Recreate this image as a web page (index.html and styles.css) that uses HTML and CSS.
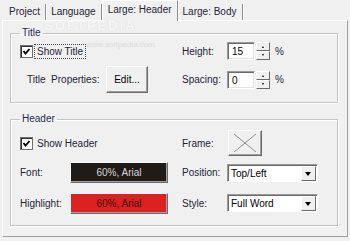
FILE: index.html
```html
<!DOCTYPE html>
<html lang="en">
<head>
    <meta charset="UTF-8">
    <title>Large: Header</title>
    <link rel="stylesheet" href="styles.css">
</head>
<body>
    <div class="tabs">
        <div class="tab">Project</div>
        <div class="tab">Language</div>
        <div class="tab active">Large: Header</div>
        <div class="tab">Large: Body</div>
    </div>

    <div class="panel">
        <fieldset class="group group-title">
            <legend>Title</legend>
            <div class="row row-1">
                <div class="left">
                    <span class="box"><svg width="9" height="9" viewBox="0 0 9 9"><polyline points="1.5,4 3.5,6.5 7.5,2" fill="none" stroke="#000" stroke-width="1.8"/></svg></span>
                    <span class="check-text focus">Show Title</span>
                </div>
                <div class="right">
                    <span class="label-r">Height:</span>
                    <span class="field">15</span>
                    <span class="spin"><span class="spin-btn up"></span><span class="spin-btn down"></span></span>
                    <span class="unit">%</span>
                </div>
            </div>
            <div class="row row-2">
                <div class="left">
                    <span class="label-props">Title&nbsp; Properties:</span>
                    <span class="btn btn-edit">Edit...</span>
                </div>
                <div class="right">
                    <span class="label-r">Spacing:</span>
                    <span class="field">0</span>
                    <span class="spin"><span class="spin-btn up"></span><span class="spin-btn down"></span></span>
                    <span class="unit">%</span>
                </div>
            </div>
        </fieldset>

        <fieldset class="group group-header">
            <legend>Header</legend>
            <div class="row row-3">
                <div class="left">
                    <span class="box"><svg width="9" height="9" viewBox="0 0 9 9"><polyline points="1.5,4 3.5,6.5 7.5,2" fill="none" stroke="#000" stroke-width="1.8"/></svg></span>
                    <span class="check-text">Show Header</span>
                </div>
                <div class="right">
                    <span class="label-r">Frame:</span>
                    <span class="btn btn-frame"><svg width="32" height="24" viewBox="0 0 32 24"><line x1="5" y1="3" x2="27" y2="21" stroke="#777" stroke-width="0.8"/><line x1="27" y1="3" x2="5" y2="21" stroke="#777" stroke-width="0.8"/></svg></span>
                </div>
            </div>
            <div class="row row-4">
                <div class="left">
                    <span class="label-l">Font:</span>
                    <span class="swatch swatch-dark">60%, Arial</span>
                </div>
                <div class="right">
                    <span class="label-r">Position:</span>
                    <span class="select"><span class="select-text">Top/Left</span><span class="select-btn"></span></span>
                </div>
            </div>
            <div class="row row-5">
                <div class="left">
                    <span class="label-l">Highlight:</span>
                    <span class="swatch swatch-red">60%, Arial</span>
                </div>
                <div class="right">
                    <span class="label-r">Style:</span>
                    <span class="select"><span class="select-text">Full Word</span><span class="select-btn"></span></span>
                </div>
            </div>
        </fieldset>
    </div>

    <!-- watermark over the dialog -->
    <div class="watermark">SOFTPEDIA</div>
    <div class="watermark-url">www.softpedia.com</div>
</body>
</html>
```

FILE: styles.css
```css
body {
    margin: 0;
    width: 350px;
    height: 241px;
    overflow: hidden;
    position: relative;
    background: #f0f0f0;
    font-family: "Liberation Sans", Arial, sans-serif;
    font-size: 10px;
    color: #1e2436;
}

.tabs {
    display: flex;
    align-items: flex-end;
    height: 20px;
    padding-left: 4px;
    position: relative;
    z-index: 1;
}

.tab {
    height: 16px;
    line-height: 16px;
    padding: 0 5px;
    border-right: 1px solid #8c8c8c;
    box-shadow: 1px 0 0 #fff;
}

.tab.active {
    height: 21px;
    line-height: 17px;
    padding: 0 5px;
    margin-bottom: -1px;
    box-sizing: border-box;
    background: #f0f0f0;
    border-top: 1px solid #fff;
    border-left: 1px solid #fff;
    border-right: 1px solid #8c8c8c;
}

.panel {
    margin: 0 2px;
    height: 217px;
    box-sizing: border-box;
    border: 1px solid;
    border-color: #fff #a0a0a0 #a0a0a0 #fff;
    padding: 6px 9px 0 7px;
}

.group {
    margin: 0;
    padding: 0 9px 9px 9px;
    border: 1px solid #c4c4c4;
    box-shadow: 1px 1px 0 #fff, inset 1px 1px 0 #fff;
}

.group legend {
    padding: 0 2px;
    line-height: 12px;
    color: #1c2850;
}

.group-header {
    margin-top: 10px;
    padding-bottom: 12px;
}

.row {
    display: flex;
    align-items: center;
}

.left {
    width: 162px;
    display: flex;
    align-items: center;
}

.right {
    display: flex;
    align-items: center;
}

.row-1 { height: 18px; margin-top: 3px; }
.row-2 { height: 27px; margin-top: 6px; }
.row-3 { height: 26px; margin-top: 5px; }
.row-4 { height: 21px; margin-top: 6px; }
.row-5 { height: 20px; margin-top: 10px; }

.label-r {
    width: 45px;
}

.label-l {
    width: 50px;
}

.label-props {
    width: 79px;
    padding-left: 7px;
}

/* checkbox */
.box {
    width: 13px;
    height: 13px;
    box-sizing: border-box;
    border: 1px solid #6f6f6f;
    box-shadow: inset 1px 1px 0 #333;
    background: #fff;
    display: flex;
    align-items: center;
    justify-content: center;
}

.check-text {
    margin-left: 2px;
    padding: 1px 2px;
}

.focus {
    outline: 1px dotted #444;
}

/* sunken fields */
.field {
    width: 28px;
    height: 18px;
    box-sizing: border-box;
    border: 1px solid;
    border-color: #9a9a9a #fff #fff #9a9a9a;
    box-shadow: inset 1px 1px 0 #6a6a6a, inset -1px -1px 0 #e3e3e3;
    background: #fff;
    padding: 3px 0 0 4px;
    color: #000;
}

.spin {
    width: 14px;
    height: 18px;
    margin-left: 1px;
    display: flex;
    flex-direction: column;
}

.spin-btn {
    flex: 1;
    position: relative;
    box-sizing: border-box;
    border: 1px solid;
    border-color: #fff #6a6a6a #6a6a6a #fff;
    background: #f0f0f0;
}

.spin-btn::after {
    content: "";
    position: absolute;
    left: 5px;
    top: 3px;
    border-left: 1.5px solid transparent;
    border-right: 1.5px solid transparent;
}

.spin-btn.up::after {
    border-bottom: 2px solid #000;
}

.spin-btn.down::after {
    top: 2px;
    border-top: 2px solid #000;
}

.unit {
    margin-left: 5px;
}

/* raised buttons */
.btn {
    box-sizing: border-box;
    border: 1px solid;
    border-color: #fff #6a6a6a #6a6a6a #fff;
    box-shadow: inset -1px -1px 0 #a0a0a0;
    background: #f0f0f0;
    display: flex;
    align-items: center;
    justify-content: center;
}

.btn-edit {
    width: 42px;
    height: 27px;
    color: #000;
}

.btn-frame {
    width: 34px;
    height: 26px;
    margin-left: 1px;
}

.swatch {
    width: 98px;
    height: 21px;
    box-sizing: border-box;
    border: 1px solid;
    border-color: #fff #6a6a6a #6a6a6a #fff;
    box-shadow: inset -1px -1px 0 #a0a0a0;
    display: flex;
    align-items: center;
    justify-content: center;
}

.swatch-dark {
    background: #211b18;
    color: #d6d6d6;
}

.swatch-red {
    background: #dc2121;
    color: #3c0c0c;
}

/* combo boxes */
.select {
    width: 91px;
    height: 18px;
    box-sizing: border-box;
    border: 1px solid;
    border-color: #9a9a9a #fff #fff #9a9a9a;
    box-shadow: inset 1px 1px 0 #6a6a6a;
    background: #fff;
    display: flex;
    color: #000;
}

.select-text {
    flex: 1;
    padding: 3px 0 0 3px;
}

.select-btn {
    width: 15px;
    margin: 1px 1px 0 0;
    position: relative;
    box-sizing: border-box;
    border: 1px solid;
    border-color: #fff #6a6a6a #6a6a6a #fff;
    background: #f0f0f0;
}

.select-btn::after {
    content: "";
    position: absolute;
    left: 3px;
    top: 5px;
    border-left: 3.5px solid transparent;
    border-right: 3.5px solid transparent;
    border-top: 4px solid #000;
}

.watermark {
    position: absolute;
    left: 44px;
    top: 21px;
    font-size: 13px;
    line-height: 10px;
    font-weight: bold;
    letter-spacing: 2px;
    color: #f7f7f7;
    text-shadow: 0 0 1px #d4d4d4;
    pointer-events: none;
}

.watermark-url {
    position: absolute;
    left: 86px;
    top: 40px;
    font-size: 8px;
    line-height: 9px;
    color: #dcdcdc;
    pointer-events: none;
}
```
